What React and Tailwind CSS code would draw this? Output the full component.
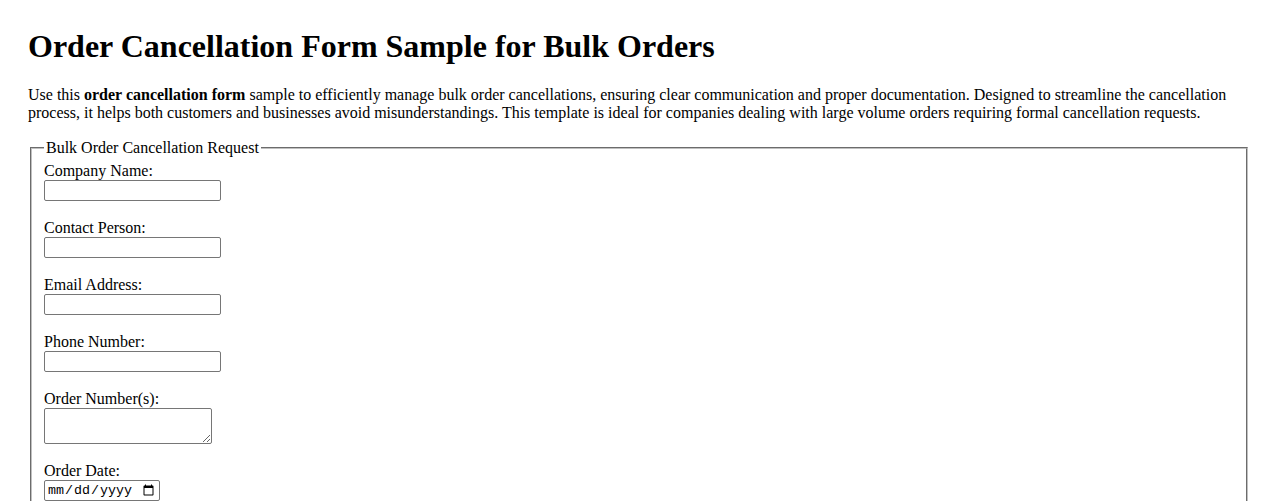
import React from "react";

const fields = [
  { id: "company", label: "Company Name:" },
  { id: "contact", label: "Contact Person:" },
  { id: "email", label: "Email Address:", type: "email" },
  { id: "phone", label: "Phone Number:", type: "tel" },
];

const inputCls =
  "block w-[177px] h-[21px] border border-[#767676] rounded-[2px] px-[2px] py-[1px] bg-white text-[13.33px] font-['Liberation_Sans',sans-serif]";

export default function App() {
  return (
    <main className="min-h-screen bg-white text-black px-[28px] pt-[28px] font-['Liberation_Serif',serif] text-[16px] leading-[18px]">
      <h1 className="text-[32px] font-bold leading-[37px] mb-[21px]">
        Order Cancellation Form Sample for Bulk Orders
      </h1>

      <p className="mb-[17px]">
        Use this <strong className="font-bold">order cancellation form</strong> sample to efficiently manage bulk
        order cancellations, ensuring clear communication and proper documentation. Designed to streamline the
        cancellation process, it helps both customers and businesses avoid misunderstandings. This template is ideal
        for companies dealing with large volume orders requiring formal cancellation requests.
      </p>

      <form>
        <fieldset className="mx-[2px] border-2 [border-style:groove] border-[#c0c0c0] px-[12px] pt-[5px] pb-[10px]">
          <legend className="px-[2px] leading-[18px]">Bulk Order Cancellation Request</legend>

          <div className="flex flex-col items-start">
            {fields.map((f) => (
              <div key={f.id} className="mb-[18px]">
                <label htmlFor={f.id} className="block h-[18px]">
                  {f.label}
                </label>
                <input id={f.id} type={f.type || "text"} className={inputCls} />
              </div>
            ))}

            <div className="mb-[18px]">
              <label htmlFor="orders" className="block h-[18px]">
                Order Number(s):
              </label>
              <textarea
                id="orders"
                rows={2}
                className="block w-[168px] h-[36px] border border-[#767676] rounded-[2px] px-[2px] py-[2px] bg-white text-[13.33px] font-['Liberation_Mono',monospace]"
              />
            </div>

            <div className="mb-[18px]">
              <label htmlFor="orderDate" className="block h-[18px]">
                Order Date:
              </label>
              <input
                id="orderDate"
                type="date"
                className="block w-[116px] h-[21px] border border-[#767676] rounded-[2px] px-[2px] py-[1px] bg-white text-[13.33px] font-['Liberation_Mono',monospace]"
              />
            </div>

            <div className="mb-[18px]">
              <label htmlFor="reason" className="block h-[18px]">
                Reason for Cancellation:
              </label>
              <textarea
                id="reason"
                rows={4}
                className="block w-[168px] h-[70px] border border-[#767676] rounded-[2px] px-[2px] py-[2px] bg-white text-[13.33px] font-['Liberation_Mono',monospace]"
              />
            </div>
          </div>
        </fieldset>
      </form>
    </main>
  );
}
